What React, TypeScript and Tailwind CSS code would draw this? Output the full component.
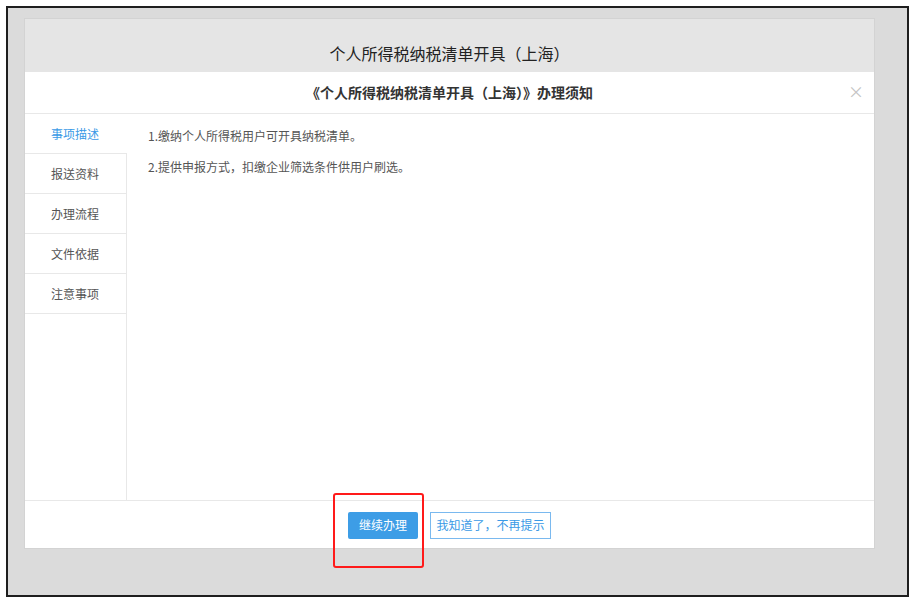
const FONT = { fontFamily: '"Microsoft YaHei", "Noto Sans CJK SC", "Noto Sans", sans-serif' };

const TABS = ["事项描述", "报送资料", "办理流程", "文件依据", "注意事项"];

export default function App() {
  const active = 0;

  return (
    <div className="w-[915px] h-[603px] bg-white p-[6px]" style={FONT}>
      <div className="relative h-full border-2 border-[#1e1e1e] bg-[#dbdbdb] pl-[16px] pt-[10px]">
        <div className="w-[851px] border border-[#d3d3d3] bg-[#e5e5e5]">
          {/* page title */}
          <div className="h-[53px] flex items-end justify-center pb-[7px] text-[16px] text-[#222]">
            个人所得税纳税清单开具（上海）
          </div>

          {/* notice dialog */}
          <div className="bg-white">
            <div className="relative h-[42px] border-b border-[#e8e8e8] flex items-center justify-center text-[14px] font-bold text-[#333]">
              《个人所得税纳税清单开具（上海）》办理须知
              <span className="absolute right-[10px] top-[7px] text-[16px] font-normal text-[#c4c4c4]">×</span>
            </div>

            <div className="flex h-[386px]">
              <div className="w-[102px] flex flex-col">
                {TABS.map((t, i) => (
                  <div
                    key={t}
                    className={
                      i === active
                        ? "h-[40px] border-b border-[#e8e8e8] pl-[26px] flex items-center text-[12px] text-[#3a9ae6]"
                        : "h-[40px] border-b border-r border-[#e8e8e8] pl-[26px] flex items-center text-[12px] text-[#555]"
                    }
                  >
                    {t}
                  </div>
                ))}
                <div className="flex-1 border-r border-[#e8e8e8]" />
              </div>
              <div className="flex-1 pl-[21px] pt-[12px] text-[12px] text-[#555]">
                <p className="leading-[20px] mb-[11px]">1.缴纳个人所得税用户可开具纳税清单。</p>
                <p className="leading-[20px]">2.提供申报方式，扣缴企业筛选条件供用户刷选。</p>
              </div>
            </div>

            <div className="h-[48px] border-t border-[#e8e8e8] flex items-center justify-center gap-[12px] pt-[1px]">
              <button className="w-[70px] h-[27px] bg-[#3d9de6] rounded-[2px] text-[12px] text-white">
                继续办理
              </button>
              <button className="w-[121px] h-[27px] border border-[#7ab9ef] bg-white text-[12px] text-[#3a9ae6]">
                我知道了，不再提示
              </button>
            </div>
          </div>
        </div>

        {/* annotation box */}
        <div className="absolute left-[325px] top-[485px] w-[91px] h-[75px] border-2 border-[#ff1a1a] rounded-[3px]" />
      </div>
    </div>
  );
}
